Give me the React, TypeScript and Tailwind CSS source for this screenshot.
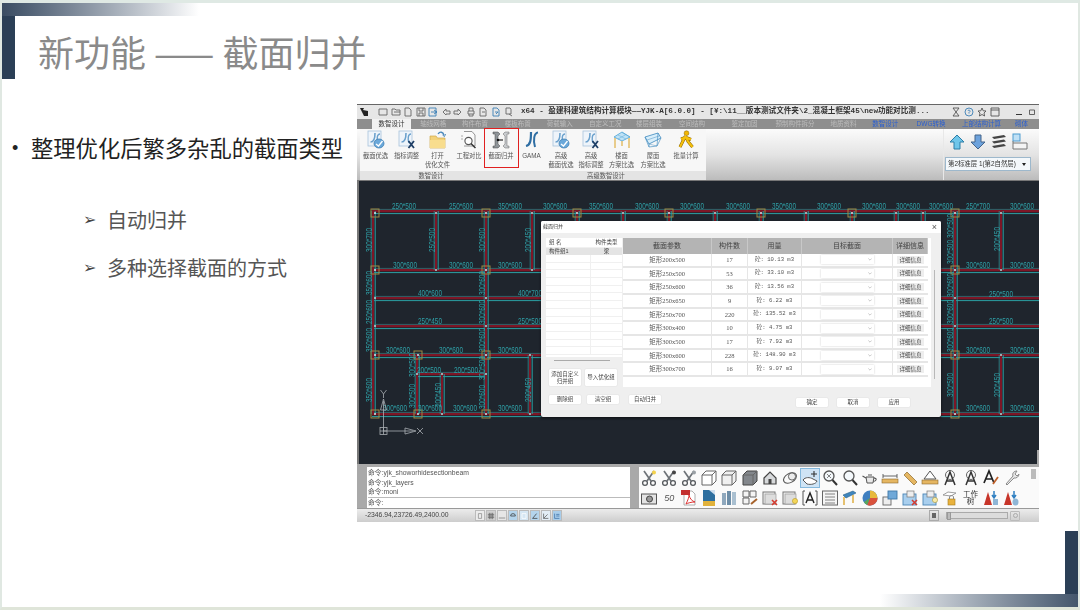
import React from "react";

const CJK = "font-['Liberation_Sans','Noto_Sans_CJK_SC',sans-serif]";

type Seg = [number, number, number];
const hBeams: Seg[] = [
  [211, 372, 1040], [270, 372, 541], [270, 941, 1040], [298, 372, 541], [298, 941, 1040],
  [326, 372, 541], [326, 941, 1040], [355, 372, 541], [355, 941, 1040], [374, 417, 486],
  [414, 372, 541], [414, 941, 1040],
];
const vBeams: Seg[] = [
  [373, 211, 414], [436, 211, 270], [486, 211, 414], [532, 211, 270], [530, 355, 414],
  [417, 355, 414], [442, 374, 414], [577, 211, 222], [623, 211, 222], [669, 211, 222],
  [715, 211, 222], [761, 211, 222], [806, 211, 222], [852, 211, 222], [896, 211, 222],
  [923, 211, 222], [955, 211, 414], [1001, 211, 270], [1001, 355, 414],
];
const cols: [number, number][] = [
  [375, 213], [486, 213], [375, 270], [486, 270], [375, 355], [418, 355], [486, 355], [375, 414],
  [418, 414], [486, 414], [577, 213], [669, 213], [761, 213], [852, 213], [955, 213], [955, 270],
  [955, 355], [955, 414],
];
const nodes: [number, number][] = [
  [436, 213], [532, 213], [623, 213], [715, 213], [806, 213], [896, 213], [923, 213], [1001, 213],
  [375, 298], [486, 298], [375, 326], [486, 326], [955, 298], [955, 326], [417, 374], [442, 374],
  [486, 374], [442, 414], [530, 355], [530, 414], [1001, 355], [1001, 414], [436, 270], [532, 270],
  [1001, 270],
];
const hLabels: [number, number, string][] = [
  [404, 209, "250*500"], [461, 209, "250*600"], [510, 209, "350*600"], [555, 209, "300*600"],
  [601, 209, "350*600"], [647, 209, "300*600"], [692, 209, "300*600"], [738, 209, "300*600"],
  [784, 209, "350*600"], [829, 209, "300*600"], [874, 209, "300*600"], [908, 209, "300*600"],
  [941, 209, "300*600"], [978, 209, "250*700"], [1022, 209, "300*600"],
  [405, 268, "300*600"], [461, 268, "300*600"], [510, 268, "300*600"], [978, 268, "300*600"],
  [1022, 268, "300*600"], [430, 296, "400*600"], [530, 296, "400*700"], [1001, 297, "250*500"],
  [430, 324, "250*450"], [530, 324, "250*500"], [1001, 324, "250*500"], [398, 353, "300*600"],
  [451, 353, "300*600"], [510, 353, "300*600"], [978, 353, "300*600"], [1022, 353, "300*600"],
  [429, 373, "200*500"], [466, 373, "200*500"], [395, 411, "300*600"], [430, 411, "300*600"],
  [465, 411, "300*600"], [510, 411, "300*600"], [978, 411, "300*600"], [1022, 411, "300*600"],
];
const vLabels: [number, number, string][] = [
  [369, 240, "300*700"], [432, 240, "250*500"], [482, 240, "300*600"], [528, 240, "200*450"],
  [369, 283, "350*600"], [369, 312, "250*600"], [369, 340, "350*600"], [369, 390, "350*600"],
  [482, 283, "300*600"], [482, 312, "300*600"], [482, 340, "300*600"], [482, 368, "300*500"],
  [412, 365, "300*500"], [412, 396, "300*500"], [438, 395, "200*450"], [482, 397, "300*600"],
  [528, 390, "200*450"], [950, 226, "300*500"], [950, 252, "300*500"], [950, 285, "300*600"],
  [950, 312, "300*600"], [950, 340, "300*600"], [950, 385, "300*500"], [997, 239, "200*450"],
  [997, 385, "200*450"],
];

function CadCanvas() {
  return (
    <svg viewBox="357 181 682 283" className="block w-[682px] h-[283px]">
      {hBeams.map(([y, a, b], i) => (
        <g key={i}>
          <line x1={a} x2={b} y1={y} y2={y} stroke="#7d1626" strokeWidth="2.4" />
          <line x1={a} x2={b} y1={y + 2.6} y2={y + 2.6} stroke="#2b9fa3" strokeWidth="1" />
          <line x1={a} x2={b} y1={y - 1.6} y2={y - 1.6} stroke="#2b8f95" strokeWidth="0.6" />
        </g>
      ))}
      {vBeams.map(([x, a, b], i) => (
        <g key={i}>
          <line y1={a} y2={b} x1={x} x2={x} stroke="#7d1626" strokeWidth="2.2" />
          <line y1={a} y2={b} x1={x + 2.2} x2={x + 2.2} stroke="#2b9fa3" strokeWidth="1" />
          <line y1={a} y2={b} x1={x - 1.8} x2={x - 1.8} stroke="#2b9fa3" strokeWidth="0.7" />
        </g>
      ))}
      {cols.map(([x, y], i) => (
        <g key={i}>
          <rect x={x - 4} y={y - 4} width="8" height="8" fill="none" stroke="#a08a45" strokeWidth="1" />
          <circle cx={x} cy={y} r="1" fill="#cfe8e8" />
        </g>
      ))}
      {nodes.map(([x, y], i) => (
        <circle key={i} cx={x} cy={y} r="1" fill="#a9dcdc" />
      ))}
      <g fill="#2f9fa6" fontSize="8.5" fontFamily="Liberation Sans, sans-serif" textAnchor="middle">
        {hLabels.map(([x, y, t], i) => (
          <text key={i} x={x} y={y} textLength="24" lengthAdjust="spacingAndGlyphs">{t}</text>
        ))}
        {vLabels.map(([x, y, t], i) => (
          <text key={i} transform={`translate(${x + 3} ${y}) rotate(-90)`} textLength="24" lengthAdjust="spacingAndGlyphs">{t}</text>
        ))}
      </g>
      <g stroke="#a8adb2" strokeWidth="0.8" fill="none">
        <path d="M383.5 431 V401 M380.5 410 L383.5 399 L386.5 410 Z" />
        <path d="M383.5 431 H413 M405 428 L416 431 L405 434 Z" />
        <rect x="380" y="427.5" width="7" height="7" />
        <path d="M380 431 H387 M383.5 427.5 V434.5" />
        <path d="M380.5 390 L383.5 394 L386.5 390 M383.5 394 V398" />
        <path d="M417 428 L423 434 M423 428 L417 434" />
      </g>
    </svg>
  );
}

/* ---------- Ribbon icons ---------- */
const Svg = ({ children, c = "w-[20px] h-[20px]" }: { children: React.ReactNode; c?: string }) => (
  <svg viewBox="0 0 20 20" className={c} fill="none">{children}</svg>
);

const JcBase = () => (
  <>
    <rect x="2" y="1" width="13" height="15" fill="#eef4fa" stroke="#a9c4dc" strokeWidth="0.8" />
    <path d="M9 3 C9 9 8 12 4.5 12" stroke="#6ba1cd" strokeWidth="1.6" />
    <path d="M14 4 C11 4 10.5 9 12 13" stroke="#6ba1cd" strokeWidth="1.4" />
  </>
);
const JcShield = () => (
  <Svg>
    <JcBase />
    <ellipse cx="13" cy="13.5" rx="5" ry="4.5" fill="#6aa8da" stroke="#3f7fb3" strokeWidth="0.8" />
    <path d="M10 14 L12.5 16 L16.5 11" stroke="#fff" strokeWidth="1.3" />
  </Svg>
);
const JcX = () => (
  <Svg>
    <JcBase />
    <path d="M11.5 11 L17 18 M17 11 L11.5 18" stroke="#1f3f66" strokeWidth="1.8" />
  </Svg>
);
const FolderIcon = () => (
  <Svg>
    <path d="M2 6 H8 L9.5 8 H17 V18 H2 Z" fill="#f3d27a" stroke="#d0a94a" strokeWidth="0.7" />
    <path d="M2 10 H17 V18 H2 Z" fill="#f8dd8e" />
    <path d="M10 4 C12 1 15 2 16 5" stroke="#4a88bb" strokeWidth="1.3" />
    <path d="M14.5 5 L16.5 6.5 L17.5 4" stroke="#4a88bb" strokeWidth="1" />
  </Svg>
);
const CompareIcon = () => (
  <Svg>
    <path d="M5 1.5 H13 L16 5 V16 H5" stroke="#8a8a8a" strokeWidth="0.9" fill="#fafafa" />
    <circle cx="9.5" cy="11" r="3.6" stroke="#555" strokeWidth="1.1" fill="#fff" />
    <path d="M12 13.5 L16.5 18" stroke="#333" strokeWidth="1.5" />
    <path d="M2 6 H4 M2 9 H4" stroke="#999" strokeWidth="0.8" />
  </Svg>
);
const MergeIcon = () => (
  <Svg>
    <path d="M2 2 H7 L9 4 L7 6 V14 L9 16 L7 18 H2 V16 H4 V4 H2 Z" fill="#8f9498" stroke="#444" strokeWidth="0.5" />
    <path d="M12 4 L14 2 H18 V4 H16 V16 H18 V18 H14 L12 16 L14 14 V6 Z" fill="#c9cccf" stroke="#666" strokeWidth="0.5" />
    <path d="M7 10 H12" stroke="#111" strokeWidth="1.1" />
    <circle cx="7" cy="10" r="1.3" fill="#111" />
  </Svg>
);
const GamaIcon = () => (
  <Svg>
    <path d="M9 2 C9 10 8.5 15 4 16" stroke="#2f6ea3" strokeWidth="2.2" />
    <path d="M16 2.5 C12 3 11 10 13 17" stroke="#2f6ea3" strokeWidth="2" />
  </Svg>
);
const FloorIcon = () => (
  <Svg>
    <path d="M2 7 L10 2 L18 7 L10 11 Z" fill="#bfe2f5" stroke="#59a9d8" strokeWidth="0.9" />
    <path d="M6 5 L14 9 M10 2.5 L18 7 M14 4.5 L6 9" stroke="#59a9d8" strokeWidth="0.5" />
    <path d="M3 8 V18 M17 8 V18 M10 11 V16" stroke="#e4bf6a" strokeWidth="1.5" />
  </Svg>
);
const RoofIcon = () => (
  <Svg>
    <path d="M2 7 L15 3 L18 8 L6 14 Z" fill="#d8eefa" stroke="#4e93c4" strokeWidth="0.9" />
    <path d="M2 7 L6 17 L6 14 M18 8 L14 16 L6 17 M15 3 L14 16" stroke="#4e93c4" strokeWidth="0.7" />
    <path d="M6 14 L14 16 M4 10 L16 6" stroke="#4e93c4" strokeWidth="0.5" />
  </Svg>
);
const RunIcon = () => (
  <Svg>
    <circle cx="10.5" cy="3.2" r="2.4" fill="#f2b705" stroke="#8a6400" strokeWidth="0.5" />
    <path d="M9.5 6 L7 11 L4 17 M9.5 6 L12 11.5 L16.5 17 M9.5 7.5 L5 9 M10 7.5 L15 9.5" stroke="#8a6400" strokeWidth="3" />
    <path d="M9.5 6 L7 11 L4 17 M9.5 6 L12 11.5 L16.5 17 M9.5 7.5 L5 9 M10 7.5 L15 9.5" stroke="#f6c10d" strokeWidth="2" />
  </Svg>
);

const ribbonItems = [
  { w: "w-[31px]", icon: <JcShield />, lines: ["截面优选"] },
  { w: "w-[31px]", icon: <JcX />, lines: ["指标调整"] },
  { w: "w-[31px]", icon: <FolderIcon />, lines: ["打开", "优化文件"] },
  { w: "w-[32px]", icon: <CompareIcon />, lines: ["工程对比"] },
  { w: "w-[32px]", icon: <MergeIcon />, lines: ["截面归并"], boxed: true },
  { w: "w-[29px]", icon: <GamaIcon />, lines: ["GAMA"] },
  { w: "w-[30px]", icon: <JcShield />, lines: ["高级", "截面优选"] },
  { w: "w-[30px]", icon: <JcX />, lines: ["高级", "指标调整"] },
  { w: "w-[31px]", icon: <FloorIcon />, lines: ["楼面", "方案比选"] },
  { w: "w-[32px]", icon: <RoofIcon />, lines: ["屋面", "方案比选"] },
  { w: "w-[34px]", icon: <RunIcon />, lines: ["批量计算"] },
];

const tabs = [
  { w: "w-[46px]", t: "轴线网格" }, { w: "w-[40px]", t: "构件布置" }, { w: "w-[48px]", t: "楼板布置" },
  { w: "w-[38px]", t: "荷载输入" }, { w: "w-[56px]", t: "自定义工况" }, { w: "w-[34px]", t: "楼层组装" },
  { w: "w-[54px]", t: "空间结构" }, { w: "w-[54px]", t: "鉴定加固" }, { w: "w-[50px]", t: "预制构件拆分" },
  { w: "w-[50px]", t: "地质资料" },
];
const blueTabs = [
  { w: "w-[36px]", t: "数智设计" }, { w: "w-[58px]", t: "DWG转换" }, { w: "w-[46px]", t: "上部结构计算" },
  { w: "w-[36px]", t: "砌体" },
];

/* ---------- Title bar ---------- */
const Tiny = ({ d, stroke = "#555" }: { d: string; stroke?: string }) => (
  <svg viewBox="0 0 10 10" className="w-[10px] h-[10px] shrink-0" fill="none">
    <path d={d} stroke={stroke} strokeWidth="0.9" />
  </svg>
);
const titleIcons = [
  "M1 2 H9 V8 H1 Z", "M1 8 V2 H4 L5 3 H9 V8 Z M3 5 H9", "M2 1 H6 L8 3 V9 H2 Z",
  "M1 1 H9 V9 H1 Z M3 1 V4 H7 V1 M3 9 V6 H7 V9", "M1 1 H8 V9 H1 Z M3 5 H9 M6 3 L9 5 L6 7",
  "M2 5 L5 2 V4 H9 V7 H5 V8 Z", "M8 5 L5 2 V4 H1 V7 H5 V8 Z", "M2 4 H8 V7 H2 Z M3 4 V1 H7 V4 M3 7 V9 H7 V7",
  "M2 1 H6 L8 3 V9 H2 Z M4 5 H7", "M2 1 H6 L8 3 V9 H2 Z M4 5 H7 M5 7 L7 5", "M3 1 H7 L8 2 V7 H3 Z M6 7 L9 9",
];

/* ---------- Bottom toolbar ---------- */
const T = ({ children }: { children: React.ReactNode }) => (
  <svg viewBox="0 0 18 18" className="w-[18px] h-[18px]" fill="none">{children}</svg>
);
const Scissors = ({ accent }: { accent: string }) => (
  <T>
    <path d="M4 2 L11 12 M14 2 L7 12" stroke="#6e7378" strokeWidth="1.7" />
    <circle cx="5" cy="14" r="2.4" stroke="#55595d" strokeWidth="1.3" />
    <circle cx="13" cy="14" r="2.4" stroke="#55595d" strokeWidth="1.3" />
    <circle cx="14" cy="3.5" r="2" fill={accent} />
  </T>
);
const Cube = ({ fill = "#fff", heavy = false }: { fill?: string; heavy?: boolean }) => (
  <T>
    <path d="M2 6 L6 2 H16 V12 L12 16 H2 Z" fill={fill} stroke={heavy ? "#444" : "#666"} strokeWidth="1" />
    <path d="M2 6 H12 V16 M12 6 L16 2" stroke="#666" strokeWidth="1" />
  </T>
);
const Win = ({ badge }: { badge: React.ReactNode }) => (
  <T>
    <rect x="2" y="3" width="12" height="12" fill="#f2f2f2" stroke="#777" strokeWidth="1" />
    <rect x="4" y="5" width="11" height="10" fill="#ddd" stroke="#999" strokeWidth="0.7" />
    {badge}
  </T>
);
const Magnifier = ({ dots = false }: { dots?: boolean }) => (
  <T>
    <circle cx="8" cy="7" r="5" fill="#f4f8fb" stroke="#555" strokeWidth="1.3" />
    <path d="M11.5 11 L16 16" stroke="#333" strokeWidth="2" />
    {dots && <path d="M6 5 L10 9 M10 5 L6 9" stroke="#666" strokeWidth="0.8" />}
  </T>
);
const LabelA = ({ arc }: { arc?: boolean }) => (
  <T>
    {arc && <circle cx="9" cy="6" r="4.5" stroke="#666" strokeWidth="1" />}
    <path d="M4 16 L9 3 L14 16 M6 12 H12" stroke="#333" strokeWidth="1.5" />
  </T>
);

const row1: React.ReactNode[] = [
  <Scissors accent="#f5d24b" />, <Scissors accent="#444" />, <Scissors accent="#9aa0a5" />,
  <Cube />, <Cube fill="#f0f0f0" />, <Cube fill="#83878c" heavy />,
  <T><path d="M3 9 L9 3 L15 9 V15 H3 Z" fill="#d7d9db" stroke="#444" strokeWidth="1.2" /><rect x="7.5" y="10" width="3" height="5" fill="#444" /></T>,
  <T><ellipse cx="9" cy="9" rx="7" ry="4.5" transform="rotate(-30 9 9)" stroke="#555" strokeWidth="1.1" /><circle cx="11" cy="7.5" r="3.6" fill="#ececec" stroke="#555" strokeWidth="0.9" /></T>,
  <span className="flex w-[20px] h-[20px] items-center justify-center bg-[#cfe4f5] border border-[#86b9dd]">
    <T><path d="M2 11 C4 8 9 8 12 10 L16 12 C15 15 10 16 6 15 Z" fill="#fff" stroke="#555" strokeWidth="1" /><path d="M13 2 V8 M10 5 H16" stroke="#333" strokeWidth="1.1" /></T>
  </span>,
  <Magnifier dots />, <Magnifier />,
  <T><path d="M5 8 H13 L12 14 H6 Z" fill="#e9e9e9" stroke="#555" strokeWidth="1" /><path d="M5 9 L1.5 7 M13 9 C16 9 16 12 12.5 12.5 M7 6 H11" stroke="#555" strokeWidth="1.1" /></T>,
  <T><path d="M2 5 V9 M16 5 V9 M2 7 H16" stroke="#555" strokeWidth="0.9" /><rect x="1" y="10" width="16" height="4" fill="#e5b661" stroke="#8a6a2f" strokeWidth="0.6" /></T>,
  <T><path d="M3 6 L6 3 L16 13 L13 16 Z" fill="#e5b661" stroke="#8a6a2f" strokeWidth="0.7" /></T>,
  <T><path d="M9 2 L15 10 H3 Z" fill="#fff" stroke="#555" strokeWidth="1" /><rect x="1" y="11" width="16" height="4" fill="#e5b661" stroke="#8a6a2f" strokeWidth="0.6" /></T>,
  <LabelA arc />, <LabelA arc />,
  <T><path d="M2 14 L7 2 L12 14 M4 10 H10" stroke="#222" strokeWidth="1.7" /><path d="M11 15 L16 8" stroke="#c0622c" strokeWidth="1.8" /></T>,
  <T><path d="M4 15 L11 7 C10 4 12 2 15 2 L13 5 L15 7 L17 5 C17 8 14 9.5 12 9 L5 16 Z" fill="#e6e6e6" stroke="#8b8b8b" strokeWidth="1" /></T>,
];

const row2: React.ReactNode[] = [
  <T><rect x="1.5" y="5" width="15" height="10" fill="#e3e3e3" stroke="#555" strokeWidth="1" /><circle cx="9.5" cy="10" r="3" fill="#999" stroke="#444" /></T>,
  <span className="flex items-center text-[9px] leading-none text-[#555] font-['Liberation_Sans',sans-serif] italic">50</span>,
  <T><path d="M4 2 H12 L15 5 V16 H4 Z" fill="#fff" stroke="#999" strokeWidth="0.8" /><rect x="1" y="1" width="9" height="5" fill="#c22f2f" /><path d="M6 15 C8 11 9 8 9 6 C10 10 12 12 15 13 C11 13 8 14 6 15 Z" stroke="#d33" strokeWidth="1" /></T>,
  <T><rect x="3" y="1" width="12" height="16" fill="#2d6e9f" /><path d="M9 1 L15 6 V1 Z" fill="#cde" /><rect x="3" y="12" width="12" height="5" fill="#e1b23c" /></T>,
  <T><rect x="2" y="4" width="4" height="12" fill="#8fa8bd" /><rect x="7" y="2" width="4" height="14" fill="#6e8ea8" /><rect x="12" y="3" width="4" height="13" fill="#a9bfd0" /></T>,
  <T><path d="M2 2 H8 V8 H2 Z M9 2 H15 V8 H9 Z M2 9 H8 V15 H2 Z" stroke="#666" strokeWidth="1" fill="#f4f4f4" /><path d="M10 15 L16 10" stroke="#a5622c" strokeWidth="2" /></T>,
  <Win badge={<path d="M11 11 L16 16 M16 11 L11 16" stroke="#d43a2f" strokeWidth="1.6" />} />,
  <Win badge={<circle cx="14" cy="12" r="2.6" fill="#f3d65a" stroke="#b89a26" strokeWidth="0.6" />} />,
  <T><path d="M4 2 H2 V16 H4 M14 2 H16 V16 H14" stroke="#555" strokeWidth="1" /><path d="M5 14 L9 4 L13 14 M6.5 11 H11.5" stroke="#222" strokeWidth="1.4" /></T>,
  <T><rect x="1.5" y="2" width="15" height="14" fill="#f5f5f5" stroke="#666" strokeWidth="1" /><path d="M4 5 H14 M4 8 H14 M4 11 H14 M4 14 H14" stroke="#777" strokeWidth="0.9" /></T>,
  <T><path d="M2 6 L12 2 L15 4 L5 9 Z" fill="#3f86bd" stroke="#2c5f88" strokeWidth="0.6" /><path d="M3 8 V16 M12 6 V14" stroke="#e0b34f" strokeWidth="1.6" /></T>,
  <T><circle cx="9" cy="9" r="7.5" fill="#3f7fc0" /><path d="M9 9 V1.5 A7.5 7.5 0 0 1 16.5 9 Z" fill="#e8b93c" /><path d="M9 9 H16.5 A7.5 7.5 0 0 1 6 16 Z" fill="#d9523d" /><path d="M9 9 L6 16 A7.5 7.5 0 0 1 3 13 Z" fill="#5aa65a" /></T>,
  <T><rect x="2" y="8" width="8" height="8" fill="#eee" stroke="#666" strokeWidth="0.9" /><rect x="7" y="2" width="9" height="8" fill="#6fa8d8" stroke="#3e78a8" strokeWidth="0.9" /></T>,
  <T><rect x="2" y="5" width="13" height="11" fill="#a9cfee" stroke="#4c86b6" strokeWidth="0.9" /><rect x="6" y="2" width="7" height="6" fill="#eee" stroke="#777" strokeWidth="0.7" /><path d="M11 11 L16 16 M16 11 L11 16" stroke="#d43a2f" strokeWidth="1.5" /></T>,
  <T><rect x="2" y="5" width="13" height="11" fill="#a9cfee" stroke="#4c86b6" strokeWidth="0.9" /><rect x="6" y="2" width="7" height="6" fill="#eee" stroke="#777" strokeWidth="0.7" /><circle cx="14" cy="11" r="2.6" fill="#f7eaa8" stroke="#a39341" strokeWidth="0.6" /></T>,
  <T><path d="M2 6 L7 3 L15 4 L10 7 Z" stroke="#888" strokeWidth="0.8" fill="#fff" /><rect x="7" y="10" width="7" height="6" fill="#e9b23d" stroke="#a37b1e" strokeWidth="0.6" /><path d="M8.5 10 V8 C8.5 6 12.5 6 12.5 8 V10" stroke="#888" strokeWidth="1" /></T>,
  <span className="flex flex-col items-center text-[7.5px] leading-[7.5px] text-[#333]"><span>工作</span><span>树</span></span>,
  <T><path d="M2 16 L6 3 L10 16 Z" fill="#c7352a" /><path d="M12 2 V8 M10 6 L12 9 L14 6" stroke="#2f7fc1" strokeWidth="1.5" /><rect x="11" y="10" width="5" height="6" fill="#8fb6d6" /></T>,
  <T><path d="M2 16 L6 3 L10 16 Z" fill="#c7352a" /><path d="M12 2 V8 M10 6 L12 9 L14 6" stroke="#2f7fc1" strokeWidth="1.5" /><ellipse cx="13.5" cy="13" rx="3" ry="3.5" fill="#8fb6d6" /></T>,
];

/* ---------- Status bar toggles ---------- */
const statusBtns: { bg: string; d: string; s: string }[] = [
  { bg: "bg-[#ececec]", d: "M3 2 H7 V8 H3 Z", s: "#888" },
  { bg: "bg-[#d0d0d0]", d: "M1 3 H9 M1 5 H9 M1 7 H9 M3 1 V9 M5 1 V9 M7 1 V9", s: "#666" },
  { bg: "bg-[#e6e6e6]", d: "M1 7.5 H9", s: "#777" },
  { bg: "bg-[#b4d4ec]", d: "M2 5 A3 3 0 1 1 8 5 M2 5 H8", s: "#333" },
  { bg: "bg-[#d5e6f3]", d: "M2.5 2 H7.5 V8 H2.5 Z", s: "#fff" },
  { bg: "bg-[#b4d4ec]", d: "M2 8 L7 2 M2 8 H8", s: "#333" },
  { bg: "bg-[#e3edf5]", d: "M2 2 V8 H8 M2 8 L7 3", s: "#555" },
  { bg: "bg-[#a9cdea]", d: "M2 2 V8 H8 M4 3 H8 M4 5 H8", s: "#3a6ea5" },
];

/* ---------- Dialog ---------- */
const tableRows = [
  ["矩形200x500", "17", "砼: 10.13 m3"],
  ["矩形250x500", "53", "砼: 33.10 m3"],
  ["矩形250x600", "36", "砼: 13.56 m3"],
  ["矩形250x650", "9", "砼: 6.22 m3"],
  ["矩形250x700", "220", "砼: 135.52 m3"],
  ["矩形300x400", "10", "砼: 4.75 m3"],
  ["矩形300x500", "17", "砼: 7.92 m3"],
  ["矩形300x600", "228", "砼: 148.90 m3"],
  ["矩形300x700", "16", "砼: 9.07 m3"],
];

const DlgBtn = ({ w, h = "h-[9px]", children }: { w: string; h?: string; children: React.ReactNode }) => (
  <div className={`${w} ${h} flex items-center justify-center text-center bg-white text-[5.5px] leading-[7px] text-[#444] rounded-[1px] shadow-[0_0_1px_#bbb]`}>
    {children}
  </div>
);

function Dialog() {
  return (
    <div className="absolute left-[182px] top-[40px] w-[400px] h-[196px] bg-[#efefef] rounded-[2px] shadow-[0_1px_3px_rgba(0,0,0,0.6)] flex flex-col text-[#444]">
      <div className="h-[12px] bg-white rounded-t-[2px] flex items-center justify-between pl-[2px] pr-[4px] text-[5px] text-[#444]">
        <span>截面归并</span>
        <span className="text-[9px] leading-none text-[#555]">×</span>
      </div>
      <div className="flex pl-[5px] pt-[5px] gap-[1px]">
        <div className="w-[76px] flex flex-col">
          <div className="h-[119px] bg-white flex flex-col text-[5.5px]">
            <div className="h-[10px] flex items-center border-b border-[#f0f0f0]">
              <span className="w-[45px] pl-[3px]">组 名</span>
              <span className="flex-1 text-center whitespace-nowrap">构件类型</span>
            </div>
            <div className="h-[7px] flex items-center bg-[#e4e4e4]">
              <span className="w-[45px] pl-[3px]">构件组1</span>
              <span className="flex-1 text-center">梁</span>
            </div>
            {Array.from({ length: 13 }).map((_, i) => (
              <div key={i} className="h-[7.7px] flex border-b border-[#f0f0f0]">
                <span className="w-[45px] border-r border-[#f0f0f0]" />
              </div>
            ))}
          </div>
          <div className="h-[1px] w-[56px] ml-[8px] mt-[3px] bg-[#aaa]" />
          <div className="flex gap-[4px] ml-[3px] mt-[8px]">
            <DlgBtn w="w-[32px]" h="h-[17px]">添加自定义<br />归并组</DlgBtn>
            <DlgBtn w="w-[32px]" h="h-[17px]">导入优化组</DlgBtn>
          </div>
        </div>
        <div className="w-[308px] h-[149px] bg-white">
          <div className="w-[305px] grid grid-cols-[89px_36px_54px_91px_35px] h-[16px] bg-[#b4b4b4] text-[7px] text-[#444] items-center text-center">
            {["截面参数", "构件数", "用量", "目标截面", "详细信息"].map((h) => (
              <span key={h} className="h-full flex items-center justify-center border-r border-[#c8c8c8] whitespace-nowrap">{h}</span>
            ))}
          </div>
          {tableRows.map((r) => (
            <div key={r[0]} className="w-[305px] h-[13.67px] grid grid-cols-[89px_36px_54px_91px_35px] border-b-2 border-[#e6e6e6] text-[5.8px] text-[#555] items-center text-center">
              <span className="border-r border-[#e6e6e6] h-full flex items-center justify-center font-['Liberation_Serif','Noto_Sans_CJK_SC',serif] text-[6.5px]">{r[0]}</span>
              <span className="border-r border-[#e6e6e6] h-full flex items-center justify-center font-['Liberation_Serif',serif] text-[6.5px]">{r[1]}</span>
              <span className="border-r border-[#e6e6e6] h-full flex items-center justify-center font-['Liberation_Mono','Noto_Sans_CJK_SC',monospace] text-[5.6px] whitespace-nowrap">{r[2]}</span>
              <span className="border-r border-[#e6e6e6] h-full flex items-center justify-center">
                <span className="w-[53px] h-[9px] bg-white shadow-[0_0_2px_#ccc] flex items-center justify-end pr-[2px]">
                  <svg viewBox="0 0 6 4" className="w-[4px] h-[3px]" fill="none"><path d="M0.5 0.5 L3 3 L5.5 0.5" stroke="#999" strokeWidth="0.8" /></svg>
                </span>
              </span>
              <span className="h-full flex items-center justify-center">
                <span className="w-[27px] h-[8px] bg-[#eeeeee] flex items-center justify-center text-[5.5px] text-[#444] whitespace-nowrap">详细信息</span>
              </span>
            </div>
          ))}
        </div>
        <div className="relative w-0">
          <div className="absolute left-[2px] top-[32px] w-[1px] h-[109px] bg-[#b8b8b8]" />
        </div>
      </div>
      <div className="flex items-center pl-[8px] mt-[8px]">
        <DlgBtn w="w-[32px]">删除组</DlgBtn>
        <span className="w-[6px]" />
        <DlgBtn w="w-[32px]">清空组</DlgBtn>
        <span className="w-[10px]" />
        <DlgBtn w="w-[32px]">自动归并</DlgBtn>
        <span className="w-[135px]" />
        <span className="flex gap-[9px] translate-y-[3px]">
          <DlgBtn w="w-[32px]">确定</DlgBtn>
          <DlgBtn w="w-[32px]">取消</DlgBtn>
          <DlgBtn w="w-[32px]">应用</DlgBtn>
        </span>
      </div>
    </div>
  );
}

/* ---------- Application window picture ---------- */
function CadWindow() {
  return (
    <div className={`w-[682px] h-[418px] shrink-0 flex flex-col overflow-hidden blur-[0.5px] ${CJK} bg-[#bdbdbd]`}>
      {/* title bar */}
      <div className="h-[15px] flex items-center bg-[#e6e6e6] border-t border-[#666] pl-[2px]">
        <svg viewBox="0 0 10 10" className="w-[10px] h-[10px] mr-[9px] shrink-0"><path d="M1 1 H5 L4 3 L9 4 V9 H5 L3 5 Z" fill="#222" /></svg>
        <div className="flex gap-[2.5px] items-center w-[141px] shrink-0">
          {titleIcons.map((d, i) => (
            <Tiny key={i} d={d} stroke={i === 4 || i === 9 ? "#3b7fb5" : "#666"} />
          ))}
        </div>
        <span className="ml-[2px] w-[412px] shrink-0 whitespace-nowrap overflow-hidden text-[7.6px] font-bold text-[#333] font-['Liberation_Mono','Noto_Sans_CJK_SC',monospace]">
          x64 - 盈建科建筑结构计算模块——YJK-A[6.0.0] - [¥:\11__版本测试文件夹\2_混凝土框架45\new功能对比测...
        </span>
        <div className="flex items-center ml-[18px] gap-[3px] text-[#666]">
          <Tiny d="M2 1 H8 L5 5 L8 9 H2 L5 5 Z" />
          <Tiny d="M5 1 A4 4 0 1 0 5 9 A4 4 0 1 0 5 1 M4 4 C4 2.5 6.5 3 6 4.5 L5 5.5 V6.5" stroke="#3b7fb5" />
          <Tiny d="M5 1 L6.2 3.8 L9 4 L7 6 L7.6 9 L5 7.5 L2.4 9 L3 6 L1 4 L3.8 3.8 Z" />
          <Tiny d="M1 1 H9 V9 H1 Z M1 3 H9" />
          <span className="w-[8px]" />
          <Tiny d="M2 7.5 H8" stroke="#222" />
          <Tiny d="M2.5 3 H7.5 V7.5 H2.5 Z" />
          <Tiny d="M2.5 2.5 L7.5 7.5 M7.5 2.5 L2.5 7.5" stroke="#222" />
        </div>
      </div>
      {/* tabs */}
      <div className="h-[10px] flex items-center bg-[#8e8e8e] pl-[15px] text-[6.5px] whitespace-nowrap">
        <span className="w-[40px] h-full flex items-center justify-center bg-[#f2f2f2] text-[#333]">数智设计</span>
        {tabs.map((t) => (
          <span key={t.t} className={`${t.w} flex justify-center text-[#bdbdbd]`}>{t.t}</span>
        ))}
        {blueTabs.map((t) => (
          <span key={t.t} className={`${t.w} flex justify-center text-[#2a5fd0]`}>{t.t}</span>
        ))}
      </div>
      {/* ribbon */}
      <div className="h-[52px] flex bg-gradient-to-b from-[#fbfbfb] via-[#e4e4e4] to-[#bcbcbc] border-b border-[#777]">
        <div className="w-[3px]" />
        <div className="flex flex-col w-[346px] bg-[#f7f7f7]">
          <div className="flex h-[42px]">
            {ribbonItems.map((it) => (
              <div key={it.lines.join()} className={`${it.w} relative flex flex-col items-center pt-[1px] text-[6.3px] leading-[9px] text-[#555] whitespace-nowrap`}>
                {it.icon}
                <span className="mt-[1px]">{it.lines[0]}</span>
                {it.lines[1] && <span>{it.lines[1]}</span>}
                {it.boxed && <div className="absolute -left-[1px] -top-[1px] w-[35px] h-[40px] border border-[#e02020]" />}
              </div>
            ))}
          </div>
          <div className="h-[9px] flex items-center bg-[#e4e4e4] text-[6.3px] text-[#555]">
            <span className="w-[142px] text-center">数智设计</span>
            <span className="w-[20px]" />
            <span className="w-[168px] text-center">高级数智设计</span>
          </div>
        </div>
        <div className="w-[237px]" />
        <div className="w-[96px] border-l border-[#e8e8e8] flex flex-col items-center pt-[3px] pr-[7px]">
          <div className="flex items-center gap-[3px] h-[20px]">
            <svg viewBox="0 0 18 18" className="w-[18px] h-[18px]"><path d="M9 2 L16 9 H12 V16 H6 V9 H2 Z" fill="#6fc6ea" stroke="#2c7ea8" /></svg>
            <svg viewBox="0 0 18 18" className="w-[18px] h-[18px]"><path d="M9 16 L16 9 H12 V2 H6 V9 H2 Z" fill="#6da2dc" stroke="#45648a" /></svg>
            <svg viewBox="0 0 18 18" className="w-[18px] h-[18px]"><path d="M2 4 L14 2 L16 4 L4 6 Z M2 8.5 L14 6.5 L16 8.5 L4 10.5 Z M2 13 L14 11 L16 13 L4 15 Z" fill="#444" /></svg>
            <svg viewBox="0 0 18 18" className="w-[18px] h-[18px]" fill="none"><rect x="2" y="1" width="7" height="7" fill="#bfe0f5" stroke="#4d9bd0" /><path d="M2 8 V16 H16 V10 H2" stroke="#777" fill="#f4f4f4" /></svg>
          </div>
          <div className="mt-[5px] w-[86px] h-[14px] bg-[#f4f8fb] border border-[#9db8cc] flex items-center justify-between pl-[2px] pr-[4px] text-[6.4px] text-[#333] whitespace-nowrap">
            <span>第2标准层 1(第2自然层)</span>
            <span className="w-0 h-0 border-x-[2px] border-t-[3px] border-x-transparent border-t-[#222]" />
          </div>
        </div>
      </div>
      {/* canvas */}
      <div className="relative h-[283px] bg-[#1f252d] border-l-2 border-[#777]">
        <div className="-ml-[2px]"><CadCanvas /></div>
        <Dialog />
        <div className="absolute right-0 bottom-0 w-[2px] h-[14px] bg-[#aaa]" />
      </div>
      {/* command + toolbar */}
      <div className="h-[44px] bg-[#a9a9a9] flex pt-[3px]">
        <div className="w-[10px]" />
        <div className="w-[263px] bg-white flex flex-col text-[6.8px] text-[#555] pl-[1px] font-['Liberation_Sans','Noto_Sans_CJK_SC',sans-serif]">
          <div className="h-[30px] flex flex-col justify-between pt-[1px] pb-[1px] leading-[9px]">
            <span>命令:yjk_showorhidesectionbeam</span>
            <span>命令:yjk_layers</span>
            <span>命令:moni</span>
          </div>
          <div className="flex-1 border-t border-[#bbb] flex items-center leading-none">命令:</div>
        </div>
        <div className="w-[9px]" />
        <div className="flex-1 bg-[#fafafa] flex">
          <div className="w-[392px] grid grid-cols-[repeat(19,20.1px)] grid-rows-[20px_20px] items-center justify-items-center pt-[1px]">
            {row1.map((n, i) => <span key={i} className="flex items-center justify-center">{n}</span>)}
            {row2.map((n, i) => <span key={i} className="flex items-center justify-center">{n}</span>)}
          </div>
          <div className="w-[5px] h-[10px] mt-[2px] bg-[#bbb]" />
        </div>
      </div>
      {/* status bar */}
      <div className="h-[14px] bg-gradient-to-b from-[#ececec] to-[#cdcdcd] flex items-center pl-[8px] text-[6.8px] text-[#444] border-t border-[#999]">
        <span className="w-[110px] shrink-0 whitespace-nowrap">-2346.94,23726.49,2400.00</span>
        <div className="flex gap-[1px] shrink-0">
          {statusBtns.map((b, i) => (
            <span key={i} className={`w-[10px] h-[11px] ${b.bg} border border-[#bbb] flex items-center justify-center`}>
              <svg viewBox="0 0 10 10" className="w-[8px] h-[8px]" fill="none"><path d={b.d} stroke={b.s} strokeWidth="0.9" /></svg>
            </span>
          ))}
        </div>
        <div className="ml-[367px] w-[10px] h-[11px] border border-[#aaa] flex items-center justify-center"><span className="w-[4px] h-[5px] bg-[#666]" /></div>
        <div className="ml-[7px] w-[62px] h-[7px] border border-[#aaa] bg-[#dcdcdc] relative"><span className="absolute left-0 -top-[1px] w-[4px] h-[8px] bg-[#bbb] border border-[#999]" /></div>
        <div className="ml-[2px] w-[10px] h-[10px] border border-[#bbb] rounded-[1px] flex items-center justify-center"><span className="w-[5px] h-[5px] rounded-full border border-[#aaa]" /></div>
      </div>
    </div>
  );
}

export default function App() {
  return (
    <div className="relative w-[1080px] h-[610px] overflow-hidden bg-white border-t-[3px] border-b-[3px] border-x-2 border-t-[#dfe9e4] border-b-[#dfe5d9] border-x-[#e0e8e2] font-['Noto_Sans_CJK_SC',sans-serif]">
      {/* corner decorations */}
      <div className="absolute left-0 top-0 w-[197px] h-[13px] bg-gradient-to-r from-[#3a4c62] to-white" />
      <div className="absolute left-0 top-[13px] w-[13px] h-[63px] bg-[#2b3f56]" />
      <div className="absolute right-0 top-[528px] w-[13px] h-[63px] bg-[#2b3f56]" />
      <div className="absolute right-0 bottom-0 w-[198px] h-[13px] bg-gradient-to-l from-[#44566c] to-white" />

      <header className="h-[101px] pl-[36px] pt-[22px] text-[36px] leading-[52px] text-[#8a8a8a] whitespace-nowrap">
        新功能 —— 截面归并
      </header>

      <main className="flex">
        <div className="w-[355px] shrink-0 pt-[28px]">
          <div className="flex items-center h-[32px] text-[22.3px] text-[#222] whitespace-nowrap">
            <span className="w-[29px] pl-[10px] text-[18px] leading-none font-['Liberation_Sans',sans-serif]">•</span>
            <span>整理优化后繁多杂乱的截面类型</span>
          </div>
          <ul className="mt-[42px] pl-[81px] flex flex-col gap-[20px] text-[20px] text-[#555]">
            <li className="flex items-center h-[28px]"><span className="w-[24px] text-[16px] text-[#444] font-['DejaVu_Sans',sans-serif]">➢</span>自动归并</li>
            <li className="flex items-center h-[28px]"><span className="w-[24px] text-[16px] text-[#444] font-['DejaVu_Sans',sans-serif]">➢</span>多种选择截面的方式</li>
          </ul>
        </div>
        <CadWindow />
      </main>
    </div>
  );
}
